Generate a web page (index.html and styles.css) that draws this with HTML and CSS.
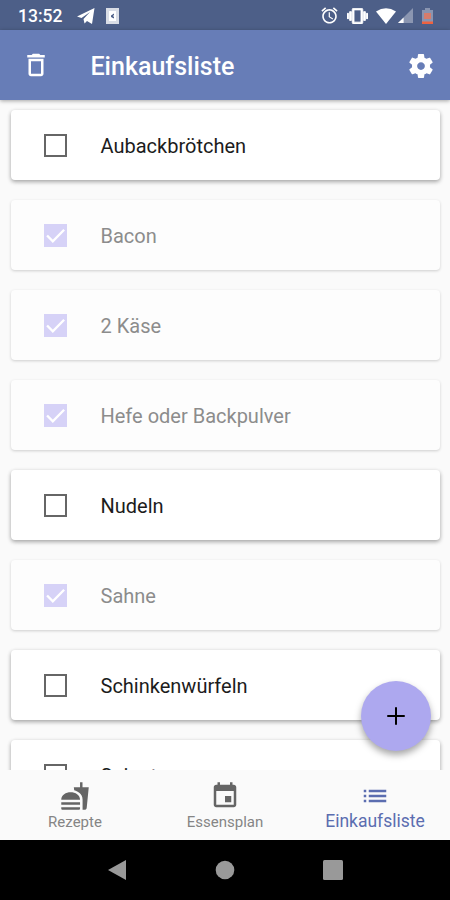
FILE: index.html
```html
<!DOCTYPE html>
<html lang="de">
<head>
<meta charset="utf-8">
<title>Einkaufsliste</title>
<link rel="stylesheet" href="styles.css">
</head>
<body>
<div class="phone">
  <div class="status">
    <span class="time">13:52</span>
    <svg class="telegram" viewBox="0 0 18 16"><path d="M0 8.500 17.500 0 15 16 10 13 7.500 15.500 6.500 11 13 4 4.500 10z"/></svg>
    <svg class="note" viewBox="0 0 13 16"><path fill="#d9dde6" d="M0 0h13v16H0z"/><path fill="#fff" d="M3 3h7v10H3z"/><path fill="#4d5f88" d="M5 7.500 8 5.500v1.500L7 8l1 1v1.500L5 9z"/></svg>
    <div class="indicators">
      <svg class="alarm" viewBox="1.500 1.500 21 21"><path d="M22 5.720l-4.600-3.860-1.290 1.530 4.600 3.860L22 5.720zM7.880 3.390L6.600 1.860 2 5.710l1.290 1.530 4.590-3.850zM12.500 8H11v6l4.750 2.850.75-1.230-4-2.370V8zM12 4c-4.970 0-9 4.030-9 9s4.020 9 9 9c4.970 0 9-4.030 9-9s-4.030-9-9-9zm0 16c-3.870 0-7-3.130-7-7s3.130-7 7-7 7 3.130 7 7-3.130 7-7 7z"/></svg>
      <svg class="vibrate" viewBox="0 3 24 18"><path d="M0 15h2V9H0v6zm3 2h2V7H3v10zm19-8v6h2V9h-2zm-3 8h2V7h-2v10zM16.500 3h-9C6.670 3 6 3.670 6 4.500v15c0 .830.670 1.500 1.500 1.500h9c.830 0 1.500-.670 1.500-1.500v-15c0-.830-.670-1.500-1.500-1.500zM16 19H8V5h8v14z"/></svg>
      <svg class="wifi" viewBox="0 0 20 16"><path d="M0 3.500Q10-3 20 3.500L10 16z"/></svg>
      <svg class="signal" viewBox="0 0 16 16"><path opacity=".35" d="M16 0v16H0z"/><path d="M6 10v6H0z"/></svg>
      <svg class="battery" viewBox="0 0 11 16"><path fill="#8994b0" d="M3 0h5v2h3v14H0V2h3z"/><path fill="#d67c6c" d="M2 5h7v6H2z"/><path fill="#ee6240" d="M0 13.500h11V16H0z"/></svg>
    </div>
  </div>
  <header class="appbar">
    <svg class="icon" viewBox="0 0 24 24"><path d="M6 19c0 1.100.9 2 2 2h8c1.100 0 2-.9 2-2V7H6v12zM8 9h8v10H8V9zm7.500-5l-1-1h-5l-1 1H5v2h14V4h-3.500z"/></svg>
    <h1>Einkaufsliste</h1>
    <svg class="icon gear" viewBox="0 0 24 24"><path d="M19.140 12.940c.04-.3.060-.61.060-.94 0-.32-.02-.64-.07-.94l2.030-1.580c.18-.14.230-.41.120-.61l-1.920-3.320c-.12-.22-.37-.29-.59-.22l-2.390.96c-.5-.38-1.030-.7-1.620-.94l-.36-2.540c-.04-.24-.24-.41-.48-.41h-3.840c-.24 0-.43.170-.47.410l-.36 2.540c-.59.240-1.130.570-1.620.940l-2.390-.96c-.22-.08-.47 0-.59.220L2.740 8.870c-.12.210-.08.470.120.610l2.030 1.580c-.05.300-.09.630-.09.940s.02.640.070.940l-2.030 1.580c-.18.140-.23.410-.12.610l1.920 3.320c.12.220.37.290.59.220l2.390-.96c.5.380 1.030.700 1.620.940l.36 2.540c.05.240.24.410.48.410h3.840c.24 0 .44-.17.470-.41l.36-2.540c.59-.24 1.130-.56 1.620-.94l2.390.96c.22.080.470 0 .59-.22l1.920-3.320c.12-.22.070-.47-.12-.61l-2.010-1.580zM12 15.100c-1.710 0-3.100-1.390-3.100-3.100s1.390-3.100 3.100-3.100 3.100 1.390 3.100 3.100-1.390 3.100-3.100 3.100z"/></svg>
  </header>
  <main class="list">
    <div class="item"><span class="box"></span><span class="name">Aubackbrötchen</span></div>
    <div class="item done"><span class="box"><svg viewBox="0 0 24 24"><path d="M3.200 12l6 6L21 6"/></svg></span><span class="name">Bacon</span></div>
    <div class="item done"><span class="box"><svg viewBox="0 0 24 24"><path d="M3.200 12l6 6L21 6"/></svg></span><span class="name">2 Käse</span></div>
    <div class="item done"><span class="box"><svg viewBox="0 0 24 24"><path d="M3.200 12l6 6L21 6"/></svg></span><span class="name">Hefe oder Backpulver</span></div>
    <div class="item"><span class="box"></span><span class="name">Nudeln</span></div>
    <div class="item done"><span class="box"><svg viewBox="0 0 24 24"><path d="M3.200 12l6 6L21 6"/></svg></span><span class="name">Sahne</span></div>
    <div class="item"><span class="box"></span><span class="name">Schinkenwürfeln</span></div>
    <div class="item"><span class="box"></span><span class="name">Spinat</span></div>
  </main>
  <button class="fab" aria-label="Hinzufügen"><svg viewBox="0 0 24 24"><path d="M19 12.800h-6.200V19h-1.600v-6.200H5v-1.600h6.200V5h1.600v6.200H19z"/></svg></button>
  <nav class="tabs">
    <div class="tab">
      <svg viewBox="0 0 24 24"><path d="M18.060 22.990h1.660c.84 0 1.530-.64 1.630-1.460L23 5.050h-5V1h-1.970v4.050h-4.970l.3 2.340c1.710.470 3.310 1.320 4.270 2.260 1.440 1.420 2.430 2.890 2.430 5.290v8.050zM1 21.990V21h15.030v.99c0 .550-.45 1-1.010 1H2.010c-.56 0-1.010-.45-1.010-1zm15.030-7c0-8-15.030-8-15.030 0h15.030zM1.020 17h15v2h-15z"/></svg>
      <span>Rezepte</span>
    </div>
    <div class="tab">
      <svg viewBox="0 0 24 24"><path d="M17 12h-5v5h5v-5zM16 1v2H8V1H6v2H5c-1.110 0-1.990.9-1.990 2L3 19c0 1.100.890 2 2 2h14c1.100 0 2-.9 2-2V5c0-1.100-.9-2-2-2h-1V1h-2zm3 18H5V8h14v11z"/></svg>
      <span>Essensplan</span>
    </div>
    <div class="tab active">
      <svg viewBox="0 0 24 24"><path d="M3 13h2v-2H3v2zm0 4h2v-2H3v2zm0-8h2V7H3v2zm4 4h14v-2H7v2zm0 4h14v-2H7v2zM7 7v2h14V7H7z"/></svg>
      <span>Einkaufsliste</span>
    </div>
  </nav>
  <div class="sysnav">
    <svg viewBox="0 0 20 22"><path d="M19 1v20L1 11z"/></svg>
    <svg viewBox="0 0 20 22"><circle cx="10" cy="11" r="9.300"/></svg>
    <svg viewBox="0 0 20 22"><rect y="1" width="20" height="20" rx="1.500"/></svg>
  </div>
</div>
</body>
</html>
```
FILE: styles.css
```css
* { box-sizing: border-box; }
body { margin: 0; font-family: Roboto, sans-serif; }
svg { display: block; fill: currentColor; flex: none; }
.phone {
  position: relative;
  width: 450px;
  height: 900px;
  display: flex;
  flex-direction: column;
  overflow: hidden;
  background: #fafafa;
}
.status {
  flex: none;
  height: 30px;
  display: flex;
  align-items: center;
  padding: 1px 17px 0 18px;
  background: #4d5f88;
  color: #fff;
}
.time { width: 59px; font-size: 17.500px; font-weight: 500; }
.telegram { width: 18px; height: 16px; }
.note { width: 13px; height: 16px; margin-left: 11px; }
.indicators { display: flex; align-items: center; margin-left: auto; }
.alarm { width: 17px; height: 17px; margin-right: 9px; }
.vibrate { width: 21px; height: 16px; margin-right: 8px; stroke: currentColor; }
.wifi { width: 20px; height: 16px; margin-right: 2px; }
.signal { width: 15px; height: 15px; margin-right: 9px; }
.battery { width: 11px; height: 16px; }
.appbar {
  position: relative;
  z-index: 1;
  flex: none;
  height: 70px;
  display: flex;
  align-items: center;
  padding: 0 14.500px 0 20.500px;
  background: #677db7;
  color: #fff;
  box-shadow: 0 1px 4px rgba(0, 0, 0, .35);
}
.appbar h1 { flex: 1; margin: 4px 0 0 40px; font-size: 25px; font-weight: 500; line-height: 30px; }
.icon { width: 30px; height: 30px; }
.gear { margin-top: 1px; }
.list {
  flex: 1;
  min-height: 0;
  overflow: hidden;
  display: flex;
  flex-direction: column;
  gap: 20px;
  padding: 10px 10px 0 11px;
}
.item {
  flex: none;
  height: 70px;
  display: flex;
  align-items: center;
  padding-left: 33px;
  font-size: 20px;
  color: #1c1c1c;
  background: #fff;
  border-radius: 4px;
  box-shadow: 0 2px 4px rgba(0, 0, 0, .28), 0 1px 4px rgba(0, 0, 0, .1);
}
.item.done { color: #8c8c8c; background: #fdfdfd; box-shadow: 0 1px 3px rgba(0, 0, 0, .18); }
.name { padding-top: 2px; }
.box { width: 23px; height: 23px; margin-right: 33.500px; border: 2px solid #666; }
.done .box { border: 0; background: #d6d2f7; }
.box svg { width: 23px; height: 23px; fill: none; stroke: #fff; stroke-width: 2.5; }
.fab {
  position: absolute;
  right: 19.500px;
  bottom: 149px;
  width: 70px;
  height: 70px;
  padding: 0;
  display: grid;
  place-items: center;
  border: 0;
  border-radius: 50%;
  background: #ada8ef;
  color: #000;
  box-shadow: 0 4px 7px rgba(0, 0, 0, .35);
}
.fab svg { width: 30px; height: 30px; }
.tabs { flex: none; height: 70px; display: flex; background: #fafafa; color: #656565; }
.tab { flex: 1; display: flex; flex-direction: column; align-items: center; padding-top: 11px; font-size: 15px; }
.tab svg { width: 30px; height: 30px; }
.tab span { line-height: 20px; margin-top: 1px; color: #858585; }
.tab.active, .tab.active span { color: #5b6db0; font-size: 17.500px; }
.tab.active span { margin-top: 0; }
.sysnav {
  flex: none;
  height: 60px;
  display: flex;
  justify-content: center;
  align-items: center;
  gap: 88px;
  background: #000;
  color: #999;
}
.sysnav svg { width: 20px; height: 22px; }
```
